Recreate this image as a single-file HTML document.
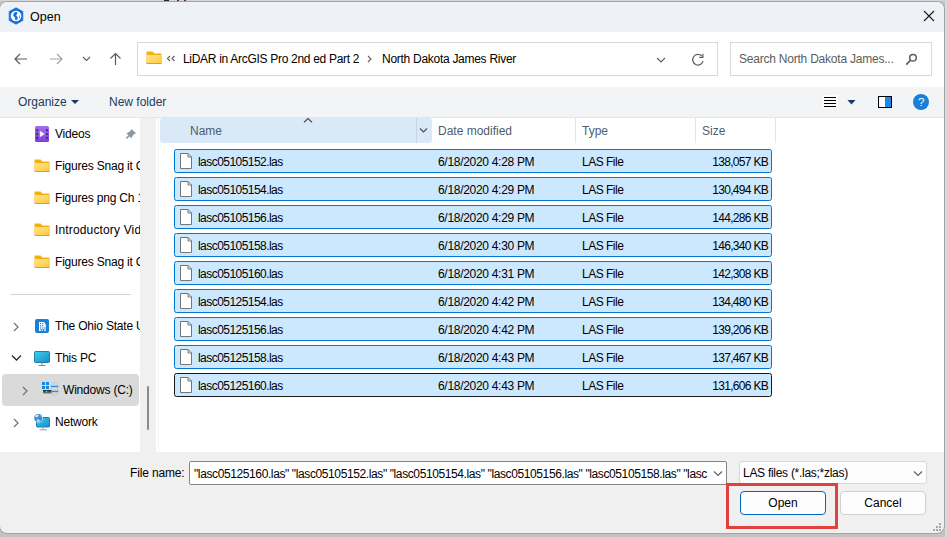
<!DOCTYPE html>
<html><head><meta charset="utf-8">
<style>
*{margin:0;padding:0;box-sizing:border-box}
html,body{width:947px;height:537px;overflow:hidden;background:#c3c3c3;font-family:"Liberation Sans",sans-serif;font-size:12px;color:#000;position:relative}
.a{position:absolute}
.t{position:absolute;white-space:nowrap;line-height:14px}
#bgr{left:945px;top:0;width:2px;height:537px;background:#dadada}
#win{left:-1px;top:1px;width:946px;height:533px;border:1px solid #a3a3a3;border-radius:8px;overflow:hidden;background:#f0f0f0}
#title{left:0;top:2px;width:944px;height:30px;background:#eef2f7;border-radius:7px 7px 0 0}
#addr{left:0;top:32px;width:944px;height:55px;background:#fff}
#cmd{left:0;top:87px;width:944px;height:31px;background:#f3f4f6;border-bottom:1px solid #e6e6e6}
#nav{left:0;top:118px;width:140px;height:334px;background:#fff}
#track{left:140px;top:118px;width:16px;height:334px;background:#f0f0f0}
#list{left:156px;top:118px;width:788px;height:334px;background:#fff}
#vline{left:158px;top:118px;width:1px;height:334px;background:#f3f3f3}
.box{position:absolute;border:1px solid #d9d9d9;background:#fff}
.hdr{color:#4d5d73}
.row{position:absolute;left:174px;width:598px;height:24px;background:#cce8ff;border:1px solid #0078d4;border-radius:2.5px}
.row.last{border-color:#1a1a1a}
.row .t{top:5px}
.fn{left:23px;letter-spacing:-0.55px}
.dt{left:263px;letter-spacing:-0.3px}
.ty{left:407px;letter-spacing:-0.5px}
.sz{right:3px;letter-spacing:-0.7px}
.fi{position:absolute;left:5px;top:3px}
.nv{position:absolute;left:55px;white-space:nowrap;line-height:14px;letter-spacing:-0.2px}
.btn{position:absolute;top:491px;height:24px;background:#fdfdfd;border:1px solid #d0d0d0;border-radius:4px;text-align:center;line-height:22px}
</style></head><body>
<div id="bgr" class="a"></div>
<div class="a" style="left:0;top:0;width:947px;height:1px;background:#d6d6d6"></div>
<div class="a" style="left:164px;top:0;width:5px;height:1px;background:#2a2a2a"></div>
<div class="a" style="left:177px;top:0;width:2px;height:1px;background:#503040"></div>
<div class="a" style="left:184px;top:0;width:2px;height:1px;background:#503040"></div>
<div id="win" class="a"></div>
<div id="title" class="a"></div>
<div id="addr" class="a"></div>
<div id="cmd" class="a"></div>
<div id="nav" class="a"></div>
<div id="track" class="a"></div>
<div id="list" class="a"></div>
<div id="vline" class="a"></div>

<!-- title -->
<div class="t" style="left:30px;top:10px;font-size:12.5px">Open</div>

<!-- address -->
<div class="box" style="left:137px;top:42px;width:581px;height:34px"></div>
<div class="t" style="left:183px;top:52px;letter-spacing:-0.3px">LiDAR in ArcGIS Pro 2nd ed Part 2</div>
<div class="t" style="left:382px;top:52px;letter-spacing:-0.28px">North Dakota James River</div>
<div class="box" style="left:730px;top:42px;width:202px;height:34px"></div>
<div class="t" style="left:739px;top:52px;color:#5c5c5c;letter-spacing:-0.22px">Search North Dakota James...</div>

<!-- command bar -->
<div class="t" style="left:18px;top:95px;color:#1c3a5e">Organize</div>
<div class="t" style="left:109px;top:95px;color:#1c3a5e">New folder</div>

<!-- header -->
<div class="a" style="left:160px;top:118px;width:272px;height:25px;background:#d9e9f7;border-radius:3px"></div>
<div class="t hdr" style="left:190px;top:124px">Name</div>
<div class="t hdr" style="left:438px;top:124px">Date modified</div>
<div class="t hdr" style="left:582px;top:124px">Type</div>
<div class="t hdr" style="left:702px;top:124px">Size</div>

<!-- rows -->
<div class="row" style="top:149px"><div class="t fn">lasc05105152.las</div><div class="t dt">6/18/2020 4:28 PM</div><div class="t ty">LAS File</div><div class="t sz">138,057 KB</div></div>
<div class="row" style="top:177px"><div class="t fn">lasc05105154.las</div><div class="t dt">6/18/2020 4:29 PM</div><div class="t ty">LAS File</div><div class="t sz">130,494 KB</div></div>
<div class="row" style="top:205px"><div class="t fn">lasc05105156.las</div><div class="t dt">6/18/2020 4:29 PM</div><div class="t ty">LAS File</div><div class="t sz">144,286 KB</div></div>
<div class="row" style="top:233px"><div class="t fn">lasc05105158.las</div><div class="t dt">6/18/2020 4:30 PM</div><div class="t ty">LAS File</div><div class="t sz">146,340 KB</div></div>
<div class="row" style="top:261px"><div class="t fn">lasc05105160.las</div><div class="t dt">6/18/2020 4:31 PM</div><div class="t ty">LAS File</div><div class="t sz">142,308 KB</div></div>
<div class="row" style="top:289px"><div class="t fn">lasc05125154.las</div><div class="t dt">6/18/2020 4:42 PM</div><div class="t ty">LAS File</div><div class="t sz">134,480 KB</div></div>
<div class="row" style="top:317px"><div class="t fn">lasc05125156.las</div><div class="t dt">6/18/2020 4:42 PM</div><div class="t ty">LAS File</div><div class="t sz">139,206 KB</div></div>
<div class="row" style="top:345px"><div class="t fn">lasc05125158.las</div><div class="t dt">6/18/2020 4:43 PM</div><div class="t ty">LAS File</div><div class="t sz">137,467 KB</div></div>
<div class="row last" style="top:373px"><div class="t fn">lasc05125160.las</div><div class="t dt">6/18/2020 4:43 PM</div><div class="t ty">LAS File</div><div class="t sz">131,606 KB</div></div>

<!-- nav -->
<div class="a" style="left:0;top:118px;width:140px;height:334px;overflow:hidden">
<div class="a" style="left:2px;top:256px;width:137px;height:32px;background:#dadada;border-radius:4px"></div>
<div class="nv" style="top:9px">Videos</div>
<div class="nv" style="top:41px">Figures Snag it Ch</div>
<div class="nv" style="top:73px">Figures png Ch 1</div>
<div class="nv" style="top:105px;letter-spacing:0.15px">Introductory Videos</div>
<div class="nv" style="top:137px">Figures Snag it Ch</div>
<div class="a" style="left:10px;top:176px;width:121px;height:1px;background:#d4d4d4"></div>
<div class="nv" style="top:201px">The Ohio State University</div>
<div class="nv" style="top:233px">This PC</div>
<div class="nv" style="top:265px;left:63px">Windows (C:)</div>
<div class="nv" style="top:297px">Network</div>
</div>
<!-- bottom -->
<div class="t" style="left:130px;top:466px;letter-spacing:-0.15px">File name:</div>
<div class="a" style="left:189px;top:461px;width:538px;height:24px;background:#fff;border:1px solid #858585;border-radius:2px"></div>
<div class="a" style="left:190px;top:463px;width:519px;height:21px;overflow:hidden"><div class="t" style="left:4px;top:4px;letter-spacing:-0.39px">"lasc05125160.las" "lasc05105152.las" "lasc05105154.las" "lasc05105156.las" "lasc05105158.las" "lasc</div></div>
<div class="a" style="left:739px;top:461px;width:188px;height:23px;background:#fdfdfd;border:1px solid #d8d8d8;border-radius:3px"></div>
<div class="t" style="left:743px;top:466px;letter-spacing:-0.28px">LAS files (*.las;*zlas)</div>
<div class="btn" style="left:740px;width:86px;border-color:#0067c0">Open</div>
<div class="btn" style="left:840px;width:86px">Cancel</div>
<div class="a" style="left:726px;top:483px;width:112px;height:46px;border:3px solid #e0413f"></div>
<!-- icons -->
<svg class="a" style="left:0;top:0" width="947" height="537" viewBox="0 0 947 537">
<defs>
<linearGradient id="fold" x1="0" y1="0" x2="1" y2="1"><stop offset="0" stop-color="#ffe38f"/><stop offset="1" stop-color="#fcc93a"/></linearGradient>
<linearGradient id="vid" x1="0" y1="0" x2="0" y2="1"><stop offset="0" stop-color="#a46cf0"/><stop offset="1" stop-color="#7a3ee0"/></linearGradient>
<linearGradient id="mon" x1="0" y1="0" x2="1" y2="1"><stop offset="0" stop-color="#3bd0ee"/><stop offset="1" stop-color="#1a8cc8"/></linearGradient>
<g id="folder"><path d="M0.5 1.5 Q0.5 0.5 1.5 0.5 H6.5 L8.5 2.5 H14.5 Q15.5 2.5 15.5 3.5 V12 Q15.5 13 14.5 13 H1.5 Q0.5 13 0.5 12 Z" fill="#f1b10f"/><path d="M0.5 4 H15.5 V12 Q15.5 13 14.5 13 H1.5 Q0.5 13 0.5 12 Z" fill="url(#fold)"/><rect x="0.5" y="12" width="15" height="1" fill="#e6a300"/></g>
<g id="file"><path d="M0.5 0.5 H8 L11.5 4 V15.5 H0.5 Z" fill="#fff" stroke="#767676" stroke-width="1"/><path d="M8 0.5 V4 H11.5" fill="none" stroke="#767676" stroke-width="1"/></g>
</defs>
<!-- title icon -->
<path d="M16 7.8 L22.8 11.6 V20.4 L16 24.2 L9.2 20.4 V11.6 Z" fill="#1570dd" stroke="#1570dd" stroke-width="0.8" stroke-linejoin="round"/>
<circle cx="16" cy="16" r="5.3" fill="#fff"/>
<path d="M14.6 12.3 Q16.4 11.4 17.4 12.5 Q17.8 13.6 16.7 14.4 Q15.7 15.2 16.7 16 Q17.9 16.9 17.7 18.4 Q17.3 20 16 20.3 Q14.6 19.7 15 18.2 Q15.2 17 14 16.4 Q12.9 15.8 13.3 14.4 Q13.7 13 14.6 12.3 Z" fill="#1570dd"/>
<path d="M19.9 14.8 Q20.6 16.9 19 19.2 Q18.5 17.6 19.9 14.8 Z" fill="#1570dd"/>
<!-- close -->
<path d="M924 11 L934 21 M934 11 L924 21" stroke="#1a1a1a" stroke-width="1.1"/>
<!-- nav arrows -->
<path d="M15 59 H27 M20 54 L15 59 L20 64" fill="none" stroke="#5c5c5c" stroke-width="1.2"/>
<path d="M50 59 H62 M57 54 L62 59 L57 64" fill="none" stroke="#a3a3a3" stroke-width="1.2"/>
<path d="M83 57 L86.5 60.5 L90 57" fill="none" stroke="#5c5c5c" stroke-width="1.1"/>
<path d="M115.5 53.5 V65 M110.5 58.5 L115.5 53.5 L120.5 58.5" fill="none" stroke="#5c5c5c" stroke-width="1.2"/>
<!-- address folder -->
<use href="#folder" x="146" y="51"/>
<path d="M170 56 L167.5 58.5 L170 61 M174.5 56 L172 58.5 L174.5 61" fill="none" stroke="#606060" stroke-width="1.2"/>
<path d="M368 56 L371 59 L368 62" fill="none" stroke="#606060" stroke-width="1.1"/>
<path d="M657 58 L661 62 L665 58" fill="none" stroke="#606060" stroke-width="1.1"/>
<path d="M703.1 61.2 A5.3 5.3 0 1 1 701.8 56" fill="none" stroke="#5f5f5f" stroke-width="1.2"/>
<path d="M699.2 57.4 H702.9 V53.7" fill="none" stroke="#5f5f5f" stroke-width="1.2"/>
<!-- search -->
<circle cx="913" cy="57.8" r="3.3" fill="none" stroke="#5f5f5f" stroke-width="1.5"/>
<path d="M910.4 60.4 L906.2 64.6" stroke="#5f5f5f" stroke-width="1.7"/>
<!-- organize triangle -->
<path d="M71 100 H79 L75 104 Z" fill="#1c3a5e"/>
<!-- view icons -->
<rect x="822" y="95" width="16" height="13" fill="#fbfbfb"/>
<path d="M824 97.5 H836 M824 100.5 H836 M824 103.5 H836 M824 106.5 H836" stroke="#000" stroke-width="1"/>
<path d="M847.5 100 H855.5 L851.5 104.5 Z" fill="#1c3a5e"/>
<rect x="878.5" y="96.5" width="13" height="11" fill="#fff" stroke="#000" stroke-width="1"/>
<rect x="885" y="97" width="6" height="10" fill="#1e8ae6"/>
<circle cx="921" cy="102" r="8" fill="#1a7fd8"/>
<text x="921.2" y="106.2" font-family="Liberation Sans" font-size="11.5" fill="#fff" text-anchor="middle">?</text>
<!-- header -->
<path d="M304 122.3 L308 118.5 L312 122.3" fill="none" stroke="#505050" stroke-width="1.2"/>
<path d="M416.5 118 V143" stroke="#c8d6e4" stroke-width="1"/>
<path d="M420 128.5 L423.5 132 L427 128.5" fill="none" stroke="#505050" stroke-width="1.2"/>
<path d="M575.5 118 V143 M695.5 118 V143 M775.5 118 V143" stroke="#e5e5e5" stroke-width="1"/>
<!-- file icons -->
<use href="#file" x="180" y="153"/>
<use href="#file" x="180" y="181"/>
<use href="#file" x="180" y="209"/>
<use href="#file" x="180" y="237"/>
<use href="#file" x="180" y="265"/>
<use href="#file" x="180" y="293"/>
<use href="#file" x="180" y="321"/>
<use href="#file" x="180" y="349"/>
<use href="#file" x="180" y="377"/>
<!-- nav icons -->
<rect x="35" y="126" width="14" height="16" rx="1.5" fill="url(#vid)"/>
<g fill="#3b2466"><rect x="36.3" y="129.3" width="1.8" height="1.8"/><rect x="36.3" y="133.1" width="1.8" height="1.8"/><rect x="36.3" y="136.9" width="1.8" height="1.8"/><rect x="46" y="129.3" width="1.8" height="1.8"/><rect x="46" y="133.1" width="1.8" height="1.8"/><rect x="46" y="136.9" width="1.8" height="1.8"/></g>
<path d="M39.8 130.8 L45 134 L39.8 137.2 Z" fill="#f0f0f0"/>
<path d="M131.5 129 L136 133.2 L133.6 134.6 L131.2 138.3 L126.5 133.6 L130.2 131.3 Z" fill="#8d979f"/>
<path d="M129 135.8 L126.4 138.4" stroke="#8d979f" stroke-width="1.5"/>
<use href="#folder" x="34" y="159"/>
<use href="#folder" x="34" y="191"/>
<use href="#folder" x="34" y="223"/>
<use href="#folder" x="34" y="255"/>
<path d="M14 323 L18 327 L14 331" fill="none" stroke="#707070" stroke-width="1.2"/>
<rect x="35" y="319" width="14" height="14" rx="2" fill="#1c7fd6"/>
<path d="M39 322 H44 L45.8 324.5 V331 H39 Z" fill="#fff"/>
<g fill="#1c7fd6"><rect x="40" y="323" width="1.2" height="1.2"/><rect x="42.2" y="323" width="1.2" height="1.2"/><rect x="40" y="325.2" width="1.2" height="1.2"/><rect x="42.2" y="325.2" width="1.2" height="1.2"/><rect x="40" y="327.4" width="1.2" height="1.2"/><rect x="42.2" y="327.4" width="1.2" height="1.2"/><rect x="44.2" y="327.4" width="1.2" height="1.2"/><rect x="40.2" y="329.2" width="5" height="0.6"/><rect x="40.9" y="329.8" width="1.2" height="1.2"/><rect x="43" y="329.8" width="1.2" height="1.2"/></g>
<path d="M12 355.5 L16.5 360 L21 355.5" fill="none" stroke="#2a2a2a" stroke-width="1.3"/>
<rect x="34.5" y="351.5" width="15" height="11" rx="1" fill="url(#mon)" stroke="#1b7fae" stroke-width="1"/>
<path d="M42 363 V365 M38.5 365.5 H45.5" stroke="#8a8a8a" stroke-width="1"/>
<path d="M23 387 L27 391 L23 395" fill="none" stroke="#707070" stroke-width="1.2"/>
<linearGradient id="drv" x1="0" y1="0" x2="0" y2="1"><stop offset="0" stop-color="#1e1e1e"/><stop offset="1" stop-color="#8a8a8a"/></linearGradient>
<g fill="#1787e6"><rect x="42" y="382" width="3" height="3"/><rect x="46" y="382" width="3" height="3"/><rect x="42" y="386" width="3" height="3"/><rect x="46" y="386" width="3" height="3"/></g>
<rect x="43" y="390" width="9.5" height="3.6" fill="url(#drv)"/>
<circle cx="46.5" cy="391.4" r="0.9" fill="#3ee04a"/>
<path d="M51.6 386 Q51.6 382.4 54.6 382.4 Q57.6 382.4 57.6 386 V392 Q57.6 395.6 54.6 395.6 Q51.6 395.6 51.6 392 Z" fill="#d3d9df" stroke="#b4bec8" stroke-width="0.6"/>
<rect x="51" y="385.8" width="7.2" height="1.3" fill="#2a8ae0"/>
<rect x="51" y="390.8" width="7.2" height="1.3" fill="#2a8ae0"/>
<path d="M14 419 L18 423 L14 427" fill="none" stroke="#707070" stroke-width="1.2"/>
<rect x="36.5" y="417.5" width="13" height="9.5" rx="1" fill="url(#mon)" stroke="#1b7fae" stroke-width="1"/>
<path d="M43 427.5 V429.3 M39.5 429.8 H47" stroke="#98a2aa" stroke-width="1"/>
<circle cx="38.3" cy="418" r="4.6" fill="#fff"/>
<circle cx="38.3" cy="418" r="4.1" fill="#3d8fd0"/>
<path d="M35 416 Q36.5 414.3 38.5 415 Q39 416.5 37 417.3 Q35.5 417.5 35 416 Z M36.5 419.5 Q38.5 419 40 420.5 Q39.2 422 37.5 421.6 Z M40 414.5 Q41.8 415.5 42 417 Q40.8 416.6 40 414.5 Z" fill="#d8ecf8"/>
<!-- scrollbar thumb -->
<rect x="147" y="386" width="2" height="44" rx="1" fill="#8a8a8a"/>
<!-- bottom chevrons -->
<path d="M714 471.5 L718 475.5 L722 471.5" fill="none" stroke="#606060" stroke-width="1.1"/>
<path d="M914 471.5 L918 475.5 L922 471.5" fill="none" stroke="#606060" stroke-width="1.1"/>
<g fill="#a8a8a8"><rect x="939" y="523" width="2" height="2"/><rect x="936" y="526" width="2" height="2"/><rect x="939" y="526" width="2" height="2"/><rect x="933" y="529" width="2" height="2"/><rect x="936" y="529" width="2" height="2"/><rect x="939" y="529" width="2" height="2"/></g>
</svg>
</body></html>
